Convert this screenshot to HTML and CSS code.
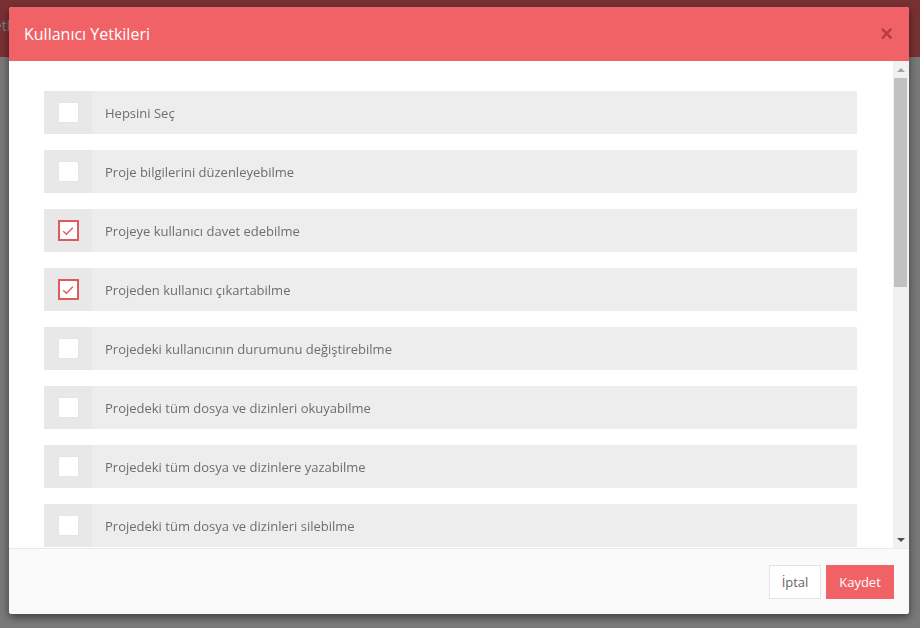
FILE: index.html
```html
<!DOCTYPE html>
<html lang="tr">
<head>
  <meta charset="UTF-8">
  <title>Kullanıcı Yetkileri</title>
  <link rel="stylesheet" href="styles.css">
</head>
<body>

  <!-- Arka plan sayfa -->
  <div class="page-header"><span class="page-title">Yetkiler</span></div>
  <div class="overlay"></div>

  <!-- Modal -->
  <div class="modal">
    <div class="modal-header">
      <h4 class="modal-title">Kullanıcı Yetkileri</h4>
      <button class="close-btn">&times;</button>
    </div>

    <div class="modal-main">
      <div class="modal-body">
        <label class="perm-row"><span class="perm-check"><span class="box"></span></span><span class="perm-text">Hepsini Seç</span></label>
        <label class="perm-row"><span class="perm-check"><span class="box"></span></span><span class="perm-text">Proje bilgilerini düzenleyebilme</span></label>
        <label class="perm-row"><span class="perm-check"><span class="box checked"><svg viewBox="0 0 16 16" width="16" height="16"><path d="M3.2 8.2 L6.5 11.2 L12.8 4.8" fill="none" stroke="#e05a5d" stroke-width="1.4"/></svg></span></span><span class="perm-text">Projeye kullanıcı davet edebilme</span></label>
        <label class="perm-row"><span class="perm-check"><span class="box checked"><svg viewBox="0 0 16 16" width="16" height="16"><path d="M3.2 8.2 L6.5 11.2 L12.8 4.8" fill="none" stroke="#e05a5d" stroke-width="1.4"/></svg></span></span><span class="perm-text">Projeden kullanıcı çıkartabilme</span></label>
        <label class="perm-row"><span class="perm-check"><span class="box"></span></span><span class="perm-text">Projedeki kullanıcının durumunu değiştirebilme</span></label>
        <label class="perm-row"><span class="perm-check"><span class="box"></span></span><span class="perm-text">Projedeki tüm dosya ve dizinleri okuyabilme</span></label>
        <label class="perm-row"><span class="perm-check"><span class="box"></span></span><span class="perm-text">Projedeki tüm dosya ve dizinlere yazabilme</span></label>
        <label class="perm-row"><span class="perm-check"><span class="box"></span></span><span class="perm-text">Projedeki tüm dosya ve dizinleri silebilme</span></label>
        <label class="perm-row"><span class="perm-check"><span class="box"></span></span><span class="perm-text">Projedeki dosyaları paylaşabilme</span></label>
        <label class="perm-row"><span class="perm-check"><span class="box"></span></span><span class="perm-text">Projedeki dosyaları indirebilme</span></label>
        <label class="perm-row"><span class="perm-check"><span class="box"></span></span><span class="perm-text">Projedeki dosyaların sürümlerini görebilme</span></label>
        <label class="perm-row"><span class="perm-check"><span class="box"></span></span><span class="perm-text">Projedeki dosyalara yorum yapabilme</span></label>
        <label class="perm-row"><span class="perm-check"><span class="box"></span></span><span class="perm-text">Projedeki görevleri yönetebilme</span></label>
        <label class="perm-row"><span class="perm-check"><span class="box"></span></span><span class="perm-text">Projedeki raporları görebilme</span></label>
        <label class="perm-row"><span class="perm-check"><span class="box"></span></span><span class="perm-text">Proje geçmişini görebilme</span></label>
        <label class="perm-row"><span class="perm-check"><span class="box"></span></span><span class="perm-text">Projeyi arşivleyebilme</span></label>
        <label class="perm-row"><span class="perm-check"><span class="box"></span></span><span class="perm-text">Projeyi silebilme</span></label>
      </div>

      <!-- Kaydırma çubuğu -->
      <div class="scrollbar">
        <span class="sb-btn"><span class="arrow-up"></span></span>
        <span class="sb-thumb"></span>
        <span class="sb-track"></span>
        <span class="sb-btn"><span class="arrow-down"></span></span>
      </div>
    </div>

    <div class="modal-footer">
      <button class="btn btn-default">İptal</button>
      <button class="btn btn-primary">Kaydet</button>
    </div>
  </div>

</body>
</html>
```

FILE: styles.css
```css
* { margin: 0; padding: 0; box-sizing: border-box; }
body {
  height: 100vh;
  background: #f2f2f2;
  font-family: 'Open Sans', 'Noto Sans', sans-serif;
  overflow: hidden;
}
.page-header {
  height: 57px;
  background: #f06266;
  padding: 14px 0 0 0;
}
.page-title {
  color: #fff;
  font-size: 14px;
  margin-left: -14px;
}
.overlay {
  position: fixed;
  inset: 0;
  background: rgba(0, 0, 0, 0.5);
}
/* Modal */
.modal {
  position: fixed;
  top: 7px;
  left: 9px;
  width: 900px;
  height: 607px;
  background: #fff;
  border-radius: 3px;
  box-shadow: 0 3px 9px rgba(0, 0, 0, 0.5);
  display: flex;
  flex-direction: column;
  overflow: hidden;
}
.modal-header {
  height: 54px;
  background: #f06266;
  display: flex;
  align-items: center;
  justify-content: space-between;
  padding: 0 16px 0 15px;
  flex-shrink: 0;
}
.modal-title {
  color: #fff;
  font-size: 16px;
  font-weight: normal;
}
.close-btn {
  background: none;
  border: none;
  color: #a8343a;
  font-size: 22px;
  font-weight: bold;
  line-height: 1;
  font-family: 'Liberation Sans', sans-serif;
  opacity: 0.8;
  cursor: pointer;
}
.modal-main {
  flex: 1;
  display: flex;
  min-height: 0;
}
.modal-body {
  flex: 1;
  overflow: hidden;
  padding: 30px 36px 30px 35px;
  display: flex;
  flex-direction: column;
  gap: 16px;
}
/* Scrollbar */
.scrollbar {
  width: 16px;
  flex-shrink: 0;
  background: #f1f1f1;
  display: flex;
  flex-direction: column;
}
.sb-btn {
  height: 17px;
  display: flex;
  align-items: center;
  justify-content: center;
}
.arrow-up {
  width: 0;
  height: 0;
  border-left: 4px solid transparent;
  border-right: 4px solid transparent;
  border-bottom: 4px solid #a3a3a3;
}
.arrow-down {
  width: 0;
  height: 0;
  border-left: 4px solid transparent;
  border-right: 4px solid transparent;
  border-top: 4px solid #505050;
}
.sb-thumb {
  height: 209px;
  margin: 0 2px 0 1px;
  background: #c1c1c1;
}
.sb-track {
  flex: 1;
}
.perm-row {
  display: flex;
  height: 43px;
  flex-shrink: 0;
  background: #ededed;
  align-items: stretch;
  cursor: pointer;
}
.perm-check {
  width: 48px;
  background: #e8e8e8;
  display: flex;
  align-items: center;
  justify-content: center;
}
.box {
  width: 21px;
  height: 21px;
  background: #fff;
  border: 1px solid #e4e4e4;
  display: flex;
  align-items: center;
  justify-content: center;
}
.box.checked {
  border: 2px solid #e05a5d;
}
.perm-text {
  display: flex;
  align-items: center;
  padding-left: 13px;
  font-size: 13px;
  color: #6e6e6e;
}
.modal-footer {
  height: 66px;
  flex-shrink: 0;
  border-top: 1px solid #e8e8e8;
  background: #fafafa;
  display: flex;
  justify-content: flex-end;
  align-items: center;
  gap: 5px;
  padding: 0 15px 0 0;
}
.btn {
  height: 34px;
  border: 1px solid #e3e3e3;
  font-family: 'Open Sans', 'Noto Sans', sans-serif;
  font-size: 13px;
  cursor: pointer;
}
.btn-default {
  width: 52px;
  background: #fff;
  color: #666;
}
.btn-primary {
  width: 68px;
  background: #f06266;
  border-color: #f06266;
  color: #fff;
}
```
